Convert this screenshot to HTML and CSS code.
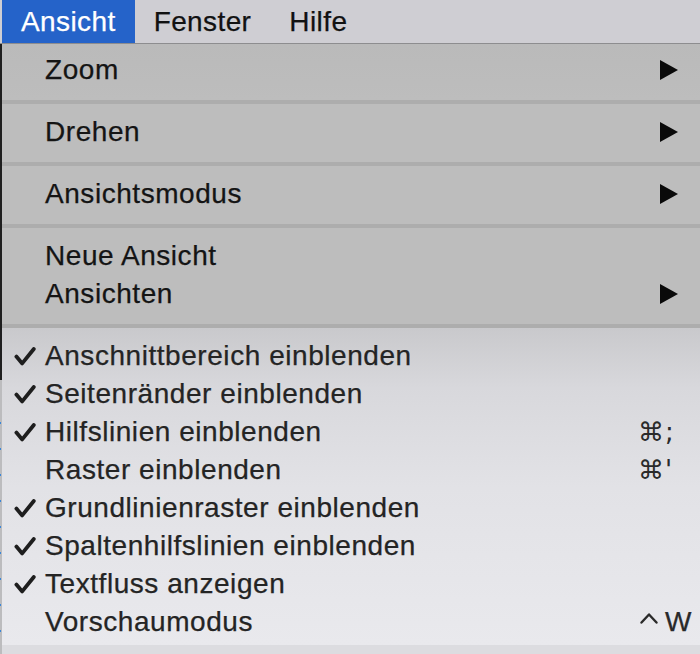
FILE: index.html
```html
<!DOCTYPE html>
<html lang="de">
<head>
<meta charset="utf-8">
<title>Ansicht</title>
<link rel="stylesheet" href="styles.css">
</head>
<body>
<nav class="menubar">
  <span class="menubar-item active">Ansicht</span>
  <span class="menubar-item">Fenster</span>
  <span class="menubar-item">Hilfe</span>
</nav>
<div class="main">
  <div class="edge"></div>
  <div class="menu">
    <div class="section first">
      <div class="row"><span class="mark"></span><span class="label">Zoom</span><span class="side"><svg class="arrow" width="18" height="20" viewBox="0 0 18 20"><polygon points="0,0 18,10 0,20"/></svg></span></div>
    </div>
    <div class="sep"></div>
    <div class="section">
      <div class="row"><span class="mark"></span><span class="label">Drehen</span><span class="side"><svg class="arrow" width="18" height="20" viewBox="0 0 18 20"><polygon points="0,0 18,10 0,20"/></svg></span></div>
    </div>
    <div class="sep"></div>
    <div class="section">
      <div class="row"><span class="mark"></span><span class="label">Ansichtsmodus</span><span class="side"><svg class="arrow" width="18" height="20" viewBox="0 0 18 20"><polygon points="0,0 18,10 0,20"/></svg></span></div>
    </div>
    <div class="sep"></div>
    <div class="section">
      <div class="row"><span class="mark"></span><span class="label">Neue Ansicht</span><span class="side"></span></div>
      <div class="row"><span class="mark"></span><span class="label">Ansichten</span><span class="side"><svg class="arrow" width="18" height="20" viewBox="0 0 18 20"><polygon points="0,0 18,10 0,20"/></svg></span></div>
    </div>
    <div class="sep"></div>
    <div class="section last">
      <div class="row"><span class="mark"><svg class="check" width="22" height="19" viewBox="0 0 22 19"><polyline points="2.4,9.6 8.2,16.4 19.8,2"/></svg></span><span class="label">Anschnittbereich einblenden</span><span class="side"></span></div>
      <div class="row"><span class="mark"><svg class="check" width="22" height="19" viewBox="0 0 22 19"><polyline points="2.4,9.6 8.2,16.4 19.8,2"/></svg></span><span class="label">Seitenränder einblenden</span><span class="side"></span></div>
      <div class="row"><span class="mark"><svg class="check" width="22" height="19" viewBox="0 0 22 19"><polyline points="2.4,9.6 8.2,16.4 19.8,2"/></svg></span><span class="label">Hilfslinien einblenden</span><span class="side key">⌘;</span></div>
      <div class="row"><span class="mark"></span><span class="label">Raster einblenden</span><span class="side key">⌘'</span></div>
      <div class="row"><span class="mark"><svg class="check" width="22" height="19" viewBox="0 0 22 19"><polyline points="2.4,9.6 8.2,16.4 19.8,2"/></svg></span><span class="label">Grundlinienraster einblenden</span><span class="side"></span></div>
      <div class="row"><span class="mark"><svg class="check" width="22" height="19" viewBox="0 0 22 19"><polyline points="2.4,9.6 8.2,16.4 19.8,2"/></svg></span><span class="label">Spaltenhilfslinien einblenden</span><span class="side"></span></div>
      <div class="row"><span class="mark"><svg class="check" width="22" height="19" viewBox="0 0 22 19"><polyline points="2.4,9.6 8.2,16.4 19.8,2"/></svg></span><span class="label">Textfluss anzeigen</span><span class="side"></span></div>
      <div class="row"><span class="mark"></span><span class="label">Vorschaumodus</span><span class="side key"><svg class="ctrl" width="18" height="12" viewBox="0 0 18 12"><polyline points="1.5,10.5 9,2.5 16.5,10.5"/></svg><span class="w">W</span></span></div>
    </div>
    <div class="footer"></div>
  </div>
</div>
</body>
</html>
```

FILE: styles.css
```css
* {
  box-sizing: border-box;
}

html,
body {
  margin: 0;
  padding: 0;
}

body {
  width: 700px;
  height: 654px;
  overflow: hidden;
  font-family: "Liberation Sans", Arial, sans-serif;
  font-size: 28px;
  background: #e6e6ea;
  color: #141414;
}

.menubar {
  display: flex;
  height: 44px;
  padding-left: 2px;
  background: #cfced3;
  border-bottom: 1px solid #8d8d8f;
}

.menubar-item {
  padding: 0 19px;
  line-height: 43px;
  color: #111;
  letter-spacing: 0.4px;
  -webkit-text-stroke: 0.25px currentColor;
}

.menubar-item.active {
  background: #2563c9;
  color: #fff;
  padding-right: 19px;
}

.main {
  display: flex;
  height: 610px;
}

.edge {
  width: 2px;
  flex: none;
  background:
    repeating-linear-gradient(to bottom, transparent 0 24px, #3a86d8 24px 26px) 0 354px / 1px 100% no-repeat,
    linear-gradient(#1f1f1f 0 336px, #bcbcbe 336px);
}

.menu {
  flex: 1;
  display: flex;
  flex-direction: column;
}

.section {
  padding: 9px 0 11px;
  background: #bdbdbd;
}

.section.first {
  padding-top: 7px;
  background: linear-gradient(#bababa, #bdbdbd);
}

.sep {
  height: 4px;
  background: #adadad;
}

.section.last {
  flex: 1;
  padding-bottom: 4px;
  background: linear-gradient(#c9c9cc 0, #d8d8dc 60px, #e2e2e6 160px, #e9e9ed 100%);
  color: #242424;
}

.footer {
  height: 9px;
  background: #dcdce0;
}

.row {
  display: grid;
  grid-template-columns: 43px 1fr 62px;
  align-items: center;
  height: 38px;
  line-height: 38px;
}

.label {
  letter-spacing: 0.55px;
  white-space: nowrap;
  -webkit-text-stroke: 0.25px currentColor;
}

.mark,
.side {
  display: flex;
  align-items: center;
  height: 38px;
}

.check {
  margin-left: 12px;
  fill: none;
  stroke: #1e1e1e;
  stroke-width: 3.8;
  stroke-linecap: round;
  stroke-linejoin: round;
}

.arrow {
  margin-left: 22px;
  fill: #0a0a0a;
}

.key {
  font-family: "DejaVu Sans", "Liberation Sans", sans-serif;
  font-size: 26px;
  color: #2a2a2a;
  letter-spacing: 1px;
}

.ctrl {
  margin-left: 2px;
  margin-top: -8px;
  fill: none;
  stroke: #2a2a2a;
  stroke-width: 2.4;
  stroke-linecap: round;
  stroke-linejoin: round;
}

.w {
  margin-left: 7px;
  font-family: "Liberation Sans", Arial, sans-serif;
  font-size: 28px;
  letter-spacing: 0;
  -webkit-text-stroke: 0.25px currentColor;
}
```
